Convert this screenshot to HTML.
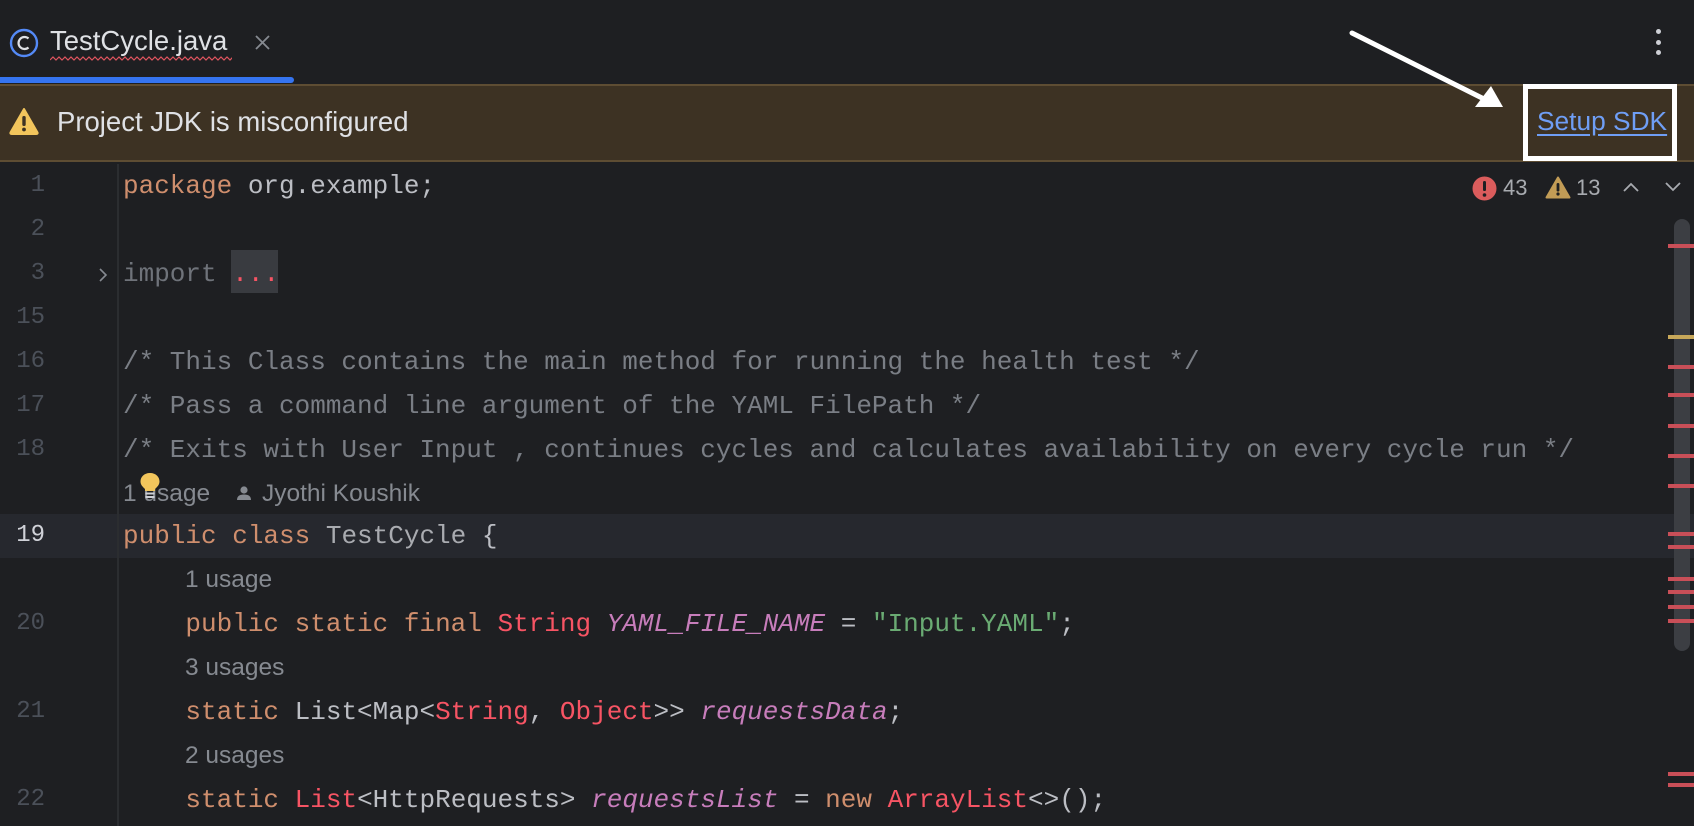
<!DOCTYPE html>
<html><head><meta charset="utf-8"><style>
*{margin:0;padding:0;box-sizing:border-box}
body{width:1694px;height:826px;background:#1e1f22;overflow:hidden;position:relative;font-family:"Liberation Sans",sans-serif}
.a{position:absolute}
.row{position:absolute;left:0;width:1694px;height:44px;line-height:44px}
.ln{position:absolute;left:0;width:45px;text-align:right;font-family:"Liberation Mono",monospace;font-size:24px;color:#4b5059}
.code{position:absolute;left:123px;font-family:"Liberation Mono",monospace;font-size:26px;color:#bcbec4;white-space:pre}
.hint{position:absolute;font-size:24.5px;color:#868a91;white-space:pre}
.k{color:#cf8e6d}.c{color:#7a7e85}.s{color:#6aab73}.e{color:#f75464}.p{color:#c77dbb;font-style:italic}.g{color:#a9abb0}.u{color:#6f737a}
.m{position:absolute;left:1668px;width:26px;height:4px;background:#c94f58}
</style></head><body>
<!-- tab bar -->
<svg class="a" style="left:9px;top:28px" width="30" height="30" viewBox="0 0 30 30"><circle cx="15" cy="15" r="13" fill="none" stroke="#548af7" stroke-width="2.4"/><path d="M19.5 10.5 A6 6 0 1 0 19.5 19.5" fill="none" stroke="#dfe1e5" stroke-width="2.2"/></svg>
<div class="a" style="left:50px;top:25px;font-size:27.5px;color:#dfe1e5">TestCycle.java</div>
<svg class="a" style="left:50px;top:56px" width="182" height="6"><path d="M0 4 l3 -3 l3 3 l3 -3 l3 3 l3 -3 l3 3 l3 -3 l3 3 l3 -3 l3 3 l3 -3 l3 3 l3 -3 l3 3 l3 -3 l3 3 l3 -3 l3 3 l3 -3 l3 3 l3 -3 l3 3 l3 -3 l3 3 l3 -3 l3 3 l3 -3 l3 3 l3 -3 l3 3 l3 -3 l3 3 l3 -3 l3 3 l3 -3 l3 3 l3 -3 l3 3 l3 -3 l3 3 l3 -3 l3 3 l3 -3 l3 3 l3 -3 l3 3 l3 -3 l3 3 l3 -3 l3 3 l3 -3 l3 3 l3 -3 l3 3 l3 -3 l3 3 l3 -3 l3 3 l3 -3 l3 3 l3 -3 l3 3 l3 -3 l3 3 l3 -3 l3 3 l3 -3" fill="none" stroke="#e0555f" stroke-width="1.2"/></svg>
<svg class="a" style="left:255px;top:35px" width="15" height="15"><path d="M1 1L14 14M14 1L1 14" stroke="#868a91" stroke-width="1.8"/></svg>
<div class="a" style="left:0;top:77px;width:294px;height:6px;background:#3574f0;border-radius:0 3px 3px 0"></div>
<div class="a" style="left:1656px;top:29px;width:5px;height:5px;border-radius:50%;background:#ced0d6"></div>
<div class="a" style="left:1656px;top:40px;width:5px;height:5px;border-radius:50%;background:#ced0d6"></div>
<div class="a" style="left:1656px;top:50px;width:5px;height:5px;border-radius:50%;background:#ced0d6"></div>
<!-- banner -->
<div class="a" style="left:0;top:84px;width:1694px;height:78px;background:#3d3223;border-top:2px solid #5e4d33;border-bottom:2px solid #5e4d33"></div>
<svg class="a" style="left:9px;top:107px" width="30" height="28" viewBox="0 0 30 28"><path d="M15 2 L28.5 25.5 Q29 27 27 27 L3 27 Q1 27 1.5 25.5 Z" fill="#f2c55c" stroke="#f2c55c" stroke-linejoin="round" stroke-width="2"/><rect x="13.3" y="9" width="3.4" height="10" rx="1.5" fill="#3d3223"/><circle cx="15" cy="22.5" r="1.9" fill="#3d3223"/></svg>
<div class="a" style="left:57px;top:106px;font-size:27.5px;color:#dfe1e5">Project JDK is misconfigured</div>
<div class="a" style="left:1523px;top:84px;width:154px;height:77px;border:5px solid #fff"></div>
<div class="a" style="left:1537px;top:106px;font-size:26.3px;color:#6f9ef5;text-decoration:underline;text-underline-offset:4px">Setup SDK</div>
<svg class="a" style="left:0;top:0" width="1694" height="120"><line x1="1352" y1="33" x2="1482" y2="98" stroke="#fff" stroke-width="5" stroke-linecap="round"/><path d="M1503 107 L1475 107 L1491 86 Z" fill="#fff"/></svg>
<!-- current row -->
<div class="a" style="left:0;top:514px;width:1694px;height:44px;background:#26282e"></div>
<div class="a" style="left:117px;top:164px;width:2px;height:662px;background:#2b2d30"></div>
<!-- rows -->
<div class="row" style="top:164px"><div class="ln">1</div><div class="code"><span class="k">package</span> org.example;</div></div>
<div class="row" style="top:208px"><div class="ln">2</div></div>
<div class="row" style="top:252px"><div class="ln">3</div><svg class="a" style="left:98px;top:15px" width="10" height="16"><path d="M2 2L8 8L2 14" fill="none" stroke="#868a91" stroke-width="1.6"/></svg><div class="a" style="left:231px;top:-2px;width:47px;height:43px;background:#393b40"></div><div class="code"><span class="u">import</span> <span class="e">...</span></div></div>
<div class="row" style="top:296px"><div class="ln">15</div></div>
<div class="row" style="top:340px"><div class="ln">16</div><div class="code c">/* This Class contains the main method for running the health test */</div></div>
<div class="row" style="top:384px"><div class="ln">17</div><div class="code c">/* Pass a command line argument of the YAML FilePath */</div></div>
<div class="row" style="top:428px"><div class="ln">18</div><div class="code c">/* Exits with User Input , continues cycles and calculates availability on every cycle run */</div></div>
<div class="row" style="top:472px"><div class="hint" style="left:123px">1 usage</div><svg class="a" style="left:236px;top:13px" width="16" height="16"><circle cx="8" cy="5" r="3.6" fill="#868a91"/><path d="M1 15 Q1 9.5 8 9.5 Q15 9.5 15 15Z" fill="#868a91"/></svg><div class="hint" style="left:262px">Jyothi Koushik</div>
<svg class="a" style="left:139px;top:0px" width="22" height="28"><path d="M11 1 C5 1 1.5 5 1.5 9.5 C1.5 13 4 15 6 17 L6 19 L16 19 L16 17 C18 15 20.5 13 20.5 9.5 C20.5 5 17 1 11 1Z" fill="#f2c55c"/><rect x="6.5" y="20.5" width="9" height="2" fill="#ced0d6"/><rect x="6.5" y="24" width="9" height="2" fill="#ced0d6"/></svg></div>
<div class="row" style="top:514px"><div class="ln" style="color:#d0d2d8">19</div><div class="code"><span class="k">public class</span> <span class="g">TestCycle</span> {</div></div>
<div class="row" style="top:558px"><div class="hint" style="left:185px">1 usage</div></div>
<div class="row" style="top:602px"><div class="ln">20</div><div class="code">    <span class="k">public static final</span> <span class="e">String</span> <span class="p">YAML_FILE_NAME</span> = <span class="s">"Input.YAML"</span>;</div></div>
<div class="row" style="top:646px"><div class="hint" style="left:185px">3 usages</div></div>
<div class="row" style="top:690px"><div class="ln">21</div><div class="code">    <span class="k">static</span> List&lt;Map&lt;<span class="e">String</span>, <span class="e">Object</span>&gt;&gt; <span class="p">requestsData</span>;</div></div>
<div class="row" style="top:734px"><div class="hint" style="left:185px">2 usages</div></div>
<div class="row" style="top:778px"><div class="ln">22</div><div class="code">    <span class="k">static</span> <span class="e">List</span>&lt;HttpRequests&gt; <span class="p">requestsList</span> = <span class="k">new</span> <span class="e">ArrayList</span>&lt;&gt;();</div></div>
<!-- indicators -->
<svg class="a" style="left:1472px;top:176px" width="25" height="25"><circle cx="12.5" cy="12.5" r="12" fill="#db5c5c"/><rect x="11" y="5" width="3" height="10" rx="1.4" fill="#1e1f22"/><circle cx="12.5" cy="19" r="1.8" fill="#1e1f22"/></svg>
<div class="a" style="left:1503px;top:175px;font-size:22px;color:#a8abb0">43</div>
<svg class="a" style="left:1545px;top:176px" width="26" height="23"><path d="M13 1.5L24.5 21.5L1.5 21.5Z" fill="#c29c56" stroke="#c29c56" stroke-width="2" stroke-linejoin="round"/><rect x="11.6" y="7" width="2.8" height="8.5" rx="1.3" fill="#1e1f22"/><circle cx="13" cy="18" r="1.6" fill="#1e1f22"/></svg>
<div class="a" style="left:1576px;top:175px;font-size:22px;color:#a8abb0">13</div>
<svg class="a" style="left:1622px;top:181px" width="18" height="12"><path d="M2 10L9 3L16 10" fill="none" stroke="#a8abb0" stroke-width="1.8"/></svg>
<svg class="a" style="left:1664px;top:181px" width="18" height="12"><path d="M2 2L9 9L16 2" fill="none" stroke="#a8abb0" stroke-width="1.8"/></svg>
<div class="a" style="left:1674px;top:219px;width:16px;height:432px;border-radius:8px;background:#3c3e43"></div>
<div class="m" style="top:244px"></div>
<div class="m" style="top:335px;background:#c8a85a"></div>
<div class="m" style="top:365px"></div><div class="m" style="top:393px"></div><div class="m" style="top:424px"></div><div class="m" style="top:454px"></div><div class="m" style="top:484px"></div><div class="m" style="top:532px"></div><div class="m" style="top:545px"></div><div class="m" style="top:577px"></div><div class="m" style="top:590px"></div><div class="m" style="top:605px"></div><div class="m" style="top:619px"></div><div class="m" style="top:772px"></div><div class="m" style="top:783px"></div>
</body></html>
